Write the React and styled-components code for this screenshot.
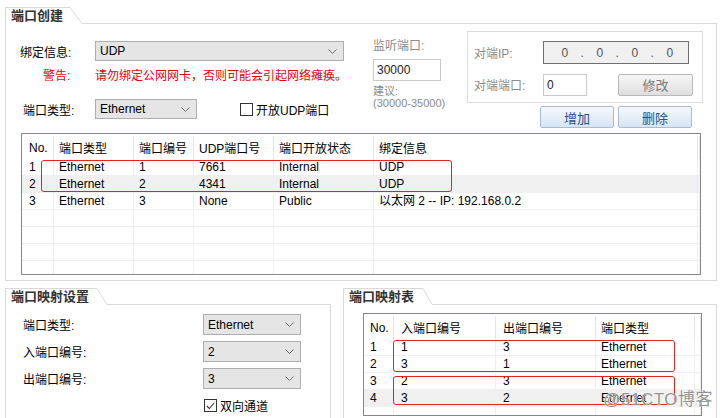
import React from 'react';
import styled, { createGlobalStyle } from 'styled-components';

const GlobalStyle = createGlobalStyle`
  html, body { margin: 0; padding: 0; background: #fff; }
  body {
    font-family: "Liberation Sans", "Noto Sans CJK SC", sans-serif;
    font-size: 12px;
    color: #000;
  }
`;

const Page = styled.div`
  position: relative;
  width: 722px;
  height: 418px;
  overflow: hidden;
  box-sizing: border-box;
  padding: 7px 5px 0 5px;
  display: flex;
  flex-direction: column;
`;

/* ---------- group box with tab ---------- */
const Group = styled.section`
  display: flex;
  flex-direction: column;
  width: ${p => p.$w}px;
  flex: none;
`;
const TabRow = styled.div`
  display: flex;
  height: 17px;
`;
const Tab = styled.div`
  box-sizing: border-box;
  width: ${p => p.$w}px;
  flex: none;
  border-left: 1px solid #d9d9d9;
  border-top: 1px solid #d9d9d9;
  padding-left: 5px;
  font-weight: bold;
  font-size: 13px;
  line-height: 16px;
  color: #333;
  white-space: nowrap;
`;
const SlopeSvg = styled.svg`
  display: block;
  flex: none;
`;
const TabRest = styled.div`
  flex: 1;
  border-bottom: 1px solid #d9d9d9;
`;
const Panel = styled.div`
  box-sizing: border-box;
  border: 1px solid #d9d9d9;
  border-top: none;
  padding: ${p => p.$pad};
  height: ${p => p.$h}px;
`;

const GroupBox = ({ title, tabW, slope, w, pad, h, children }) => (
  <Group $w={w}>
    <TabRow>
      <Tab $w={tabW}>{title}</Tab>
      <SlopeSvg width={slope} height="17" viewBox={`0 0 ${slope} 17`}>
        <line x1="0" y1="0.5" x2={slope} y2="16.5" stroke="#d9d9d9" strokeWidth="1" />
      </SlopeSvg>
      <TabRest />
    </TabRow>
    <Panel $pad={pad} $h={h}>{children}</Panel>
  </Group>
);

/* ---------- form parts ---------- */
const TopArea = styled.div`
  display: flex;
  height: 97px;
`;
const BindForm = styled.div`
  width: 324px;
  flex: none;
  display: flex;
  flex-direction: column;
`;
const FormRow = styled.div`
  display: flex;
  align-items: center;
  height: ${p => p.$h}px;
  margin-top: ${p => p.$mt}px;
`;
const Label = styled.span`
  box-sizing: border-box;
  flex: none;
  width: ${p => (p.$w ? `${p.$w}px` : 'auto')};
  padding-left: ${p => p.$pl || 0}px;
  color: ${p => p.$color || '#000'};
  white-space: nowrap;
`;
const Warning = styled.span`
  color: #e8000b;
  white-space: nowrap;
`;
const SelectBox = styled.div`
  box-sizing: border-box;
  flex: none;
  width: ${p => p.$w}px;
  height: ${p => p.$h || 20}px;
  border: 1px solid #adadad;
  background: #e5e5e5;
  display: flex;
  align-items: center;
  justify-content: space-between;
  padding: 0 6px 0 4px;
  color: #000;
`;
const Chevron = () => (
  <svg width="9" height="5" viewBox="0 0 9 5">
    <path d="M0.5 0.5 L4.5 4.5 L8.5 0.5" fill="none" stroke="#6d6d6d" strokeWidth="1" />
  </svg>
);
const Select = ({ w, h, children }) => (
  <SelectBox $w={w} $h={h}>
    <span>{children}</span>
    <Chevron />
  </SelectBox>
);

const CheckLine = styled.label`
  display: flex;
  align-items: center;
  gap: 3px;
  margin-left: ${p => p.$ml || 0}px;
  white-space: nowrap;
`;
const CheckBox = styled.span`
  box-sizing: border-box;
  width: 13px;
  height: 13px;
  border: 1px solid #333;
  background: #fff;
  display: inline-flex;
  align-items: center;
  justify-content: center;
  flex: none;
`;
const Check = ({ checked }) => (
  <CheckBox>
    {checked && (
      <svg width="9" height="8" viewBox="0 0 9 8">
        <path d="M0.8 4 L3.3 6.5 L8.2 1" fill="none" stroke="#333" strokeWidth="1.1" />
      </svg>
    )}
  </CheckBox>
);

const ListenCol = styled.div`
  width: 72px;
  flex: none;
  margin-left: 29px;
  display: flex;
  flex-direction: column;
  color: #888;
`;
const GrayText = styled.div`
  line-height: ${p => p.$lh || 16}px;
  font-size: ${p => p.$fs || 12}px;
  margin-top: ${p => p.$mt || 0}px;
  white-space: nowrap;
  color: #8a8a8a;
`;
const TextInput = styled.div`
  box-sizing: border-box;
  width: ${p => p.$w}px;
  height: 22px;
  flex: none;
  border: 1px solid #c9c9c9;
  background: #fff;
  padding-left: 3px;
  display: flex;
  align-items: center;
  color: #222;
  margin-top: ${p => p.$mt || 0}px;
`;

const RightCol = styled.div`
  width: 236px;
  flex: none;
  margin-left: 22px;
  display: flex;
  flex-direction: column;
`;
const PeerBox = styled.div`
  box-sizing: border-box;
  height: 72px;
  border: 1px solid #dcdcdc;
  padding: 9px 0 0 6px;
  display: flex;
  flex-direction: column;
  gap: 9px;
`;
const PeerRow = styled.div`
  display: flex;
  align-items: center;
  height: 23px;
`;
const IpBox = styled.div`
  box-sizing: border-box;
  width: 146px;
  height: 23px;
  border: 1px solid #6f6f6f;
  background: #f0f0f0;
  display: grid;
  grid-template-columns: repeat(7, 17.5px);
  padding-left: 12px;
  align-items: center;
  color: #555;
`;
const IpCell = styled.span`
  text-align: center;
`;
const GrayButton = styled.div`
  box-sizing: border-box;
  width: 75px;
  height: 22px;
  margin-left: 31px;
  border: 1px solid #b8b8b8;
  border-radius: 2px;
  background: linear-gradient(#f6f6f6, #dedede);
  display: flex;
  align-items: center;
  justify-content: center;
  color: #7a7a7a;
  font-size: 13px;
`;
const ButtonRow = styled.div`
  display: flex;
  justify-content: flex-end;
  gap: 4px;
  padding-right: 11px;
  margin-top: 3px;
`;
const BlueButton = styled.div`
  box-sizing: border-box;
  width: 74px;
  height: 22px;
  border: 1px solid #aabdd3;
  border-radius: 2px;
  background: linear-gradient(#f5f9fd, #d6e5f4);
  display: flex;
  align-items: center;
  justify-content: center;
  color: #26528c;
  font-size: 13px;
`;

/* ---------- list views ---------- */
const ListFrame = styled.div`
  position: relative;
  box-sizing: border-box;
  height: ${p => p.$h}px;
  margin: ${p => p.$m};
  border: 1px solid #828790;
  background: #fff;
  overflow: hidden;
`;
const HeadRow = styled.div`
  display: grid;
  grid-template-columns: ${p => p.$cols};
  height: 25px;
`;
const HeadCell = styled.div`
  display: flex;
  align-items: center;
  padding-left: ${p => p.$pl ?? 5}px;
  border-right: 1px solid #e5e5e5;
  margin-top: 2px;
  white-space: nowrap;
  overflow: hidden;
`;
const BodyRow = styled.div`
  display: grid;
  grid-template-columns: ${p => p.$cols};
  height: 17px;
  box-sizing: border-box;
  border-bottom: 1px solid #efefef;
  background: ${p => (p.$hl ? '#f0f0f0' : '#fff')};
`;
const Cell = styled.div`
  padding-left: ${p => p.$pl ?? 5}px;
  border-right: 1px solid #efefef;
  line-height: 17px;
  white-space: nowrap;
  overflow: hidden;
`;
const Mark = styled.div`
  position: absolute;
  box-sizing: border-box;
  border: 1px solid #e8211a;
  border-radius: 3px;
  pointer-events: none;
`;

const ListView = ({ cols, heads, rows, pls, h, m, marks, hl, fill }) => {
  const body = [...rows];
  while (body.length < fill) body.push(heads.map(() => ''));
  return (
    <ListFrame $h={h} $m={m}>
      <HeadRow $cols={cols}>
        {heads.map((t, i) => (
          <HeadCell key={i} $pl={pls[i]}>{t}</HeadCell>
        ))}
      </HeadRow>
      {body.map((r, ri) => (
        <BodyRow key={ri} $cols={cols} $hl={ri === hl}>
          {r.map((c, ci) => (
            <Cell key={ci} $pl={pls[ci]}>{c}</Cell>
          ))}
        </BodyRow>
      ))}
      {marks.map((mk, i) => (
        <Mark key={i} style={{ left: mk[0], top: mk[1], width: mk[2], height: mk[3] }} />
      ))}
    </ListFrame>
  );
};

/* ---------- bottom ---------- */
const BottomRow = styled.div`
  display: flex;
  gap: 12px;
  margin-top: 7px;
`;
const MapForm = styled.div`
  display: grid;
  grid-template-columns: 180px 98px;
  grid-auto-rows: 21px;
  row-gap: 6px;
  align-items: center;
`;
const Watermark = styled.div`
  position: absolute;
  right: 9px;
  bottom: 8px;
  font-family: "Liberation Sans", "Noto Sans CJK SC", sans-serif;
  font-size: 17px;
  color: rgba(110, 110, 110, 0.75);
  text-shadow: 0 0 2px #fff, 0 0 1px #fff;
  letter-spacing: 0.5px;
  pointer-events: none;
`;

const portCols = '32px 80px 60px 80px 100px 324px 1fr';
const portHeads = ['No.', '端口类型', '端口编号', 'UDP端口号', '端口开放状态', '绑定信息', ''];
const portRows = [
  ['1', 'Ethernet', '1', '7661', 'Internal', 'UDP', ''],
  ['2', 'Ethernet', '2', '4341', 'Internal', 'UDP', ''],
  ['3', 'Ethernet', '3', 'None', 'Public', '以太网 2 -- IP: 192.168.0.2', ''],
];
const mapCols = '30px 102px 100px 99px 1fr';
const mapHeads = ['No.', '入端口编号', '出端口编号', '端口类型', ''];
const mapRows = [
  ['1', '1', '3', 'Ethernet', ''],
  ['2', '3', '1', 'Ethernet', ''],
  ['3', '2', '3', 'Ethernet', ''],
  ['4', '3', '2', 'Ethernet', ''],
];

export default function App() {
  return (
    <>
      <GlobalStyle />
      <Page>
        <GroupBox title="端口创建" tabW={65} slope={12} w={712} h={257} pad="7px 13px 5px 14px">
          <TopArea>
            <BindForm>
              <FormRow $h={20} $mt={10}>
                <Label $w={75}>绑定信息:</Label>
                <Select w={249}>UDP</Select>
              </FormRow>
              <FormRow $h={16} $mt={5}>
                <Label $w={75} $pl={23} $color="#e8000b">警告:</Label>
                <Warning>请勿绑定公网网卡，否则可能会引起网络瘫痪。</Warning>
              </FormRow>
              <FormRow $h={20} $mt={17}>
                <Label $w={75} $pl={3}>端口类型:</Label>
                <Select w={102}>Ethernet</Select>
                <CheckLine $ml={43}>
                  <Check />
                  <span>开放UDP端口</span>
                </CheckLine>
              </FormRow>
            </BindForm>
            <ListenCol>
              <GrayText $mt={7}>监听端口:</GrayText>
              <TextInput $w={68} $mt={5}>30000</TextInput>
              <GrayText $lh={12} $fs={11} $mt={4}>建议:</GrayText>
              <GrayText $lh={12} $fs={11}>(30000-35000)</GrayText>
            </ListenCol>
            <RightCol>
              <PeerBox>
                <PeerRow>
                  <Label $w={69} $color="#8a8a8a">对端IP:</Label>
                  <IpBox>
                    <IpCell>0</IpCell><IpCell>.</IpCell><IpCell>0</IpCell><IpCell>.</IpCell>
                    <IpCell>0</IpCell><IpCell>.</IpCell><IpCell>0</IpCell>
                  </IpBox>
                </PeerRow>
                <PeerRow>
                  <Label $w={69} $color="#8a8a8a">对端端口:</Label>
                  <TextInput $w={44}>0</TextInput>
                  <GrayButton>修改</GrayButton>
                </PeerRow>
              </PeerBox>
              <ButtonRow>
                <BlueButton>增加</BlueButton>
                <BlueButton>删除</BlueButton>
              </ButtonRow>
            </RightCol>
          </TopArea>
          <ListView
            cols={portCols}
            heads={portHeads}
            rows={portRows}
            pls={[7, 5, 5, 5, 5, 5, 0]}
            h={142}
            m="5px 2px 0 1px"
            hl={1}
            fill={7}
            marks={[[19, 26, 411, 32]]}
          />
        </GroupBox>

        <BottomRow>
          <GroupBox title="端口映射设置" tabW={92} slope={10} w={326} h={150} pad="9px 0 0 17px">
            <MapForm>
              <Label>端口类型:</Label>
              <Select w={98} h={21}>Ethernet</Select>
              <Label>入端口编号:</Label>
              <Select w={98} h={21}>2</Select>
              <Label>出端口编号:</Label>
              <Select w={98} h={21}>3</Select>
              <span />
              <CheckLine $ml={1}>
                <Check checked />
                <span>双向通道</span>
              </CheckLine>
            </MapForm>
          </GroupBox>
          <GroupBox title="端口映射表" tabW={80} slope={9} w={374} h={150} pad="8px 0 0 19px">
            <ListView
              cols={mapCols}
              heads={mapHeads}
              rows={mapRows}
              pls={[6, 7, 7, 5, 0]}
              h={103}
              m="0 14px 0 0"
              hl={3}
              fill={5}
              marks={[[29, 26, 282, 32], [29, 62, 282, 29]]}
            />
          </GroupBox>
        </BottomRow>
        <Watermark>@51CTO博客</Watermark>
      </Page>
    </>
  );
}
